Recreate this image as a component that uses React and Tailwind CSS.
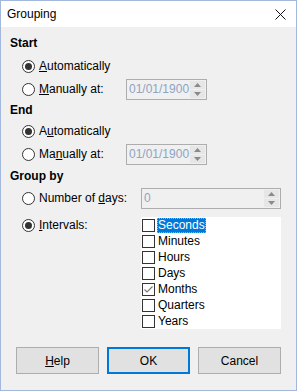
import React from "react";

const Radio = ({ checked }) => (
  <span className="w-[13px] h-[13px] rounded-full border border-[#333] bg-white flex items-center justify-center shrink-0">
    {checked && <span className="w-[7px] h-[7px] rounded-full bg-[#333]" />}
  </span>
);

const Spinner = () => (
  <div className="flex flex-col w-[15px] h-[17px] mr-[1px]">
    <div className="flex-1 bg-[#e6e6e6] border-b border-[#f0f0f0] flex items-center justify-center">
      <svg width="7" height="4" viewBox="0 0 7 4">
        <path d="M0 4 L3.5 0 L7 4 Z" fill="#8a8a8a" />
      </svg>
    </div>
    <div className="flex-1 bg-[#e6e6e6] flex items-center justify-center">
      <svg width="7" height="4" viewBox="0 0 7 4">
        <path d="M0 0 L3.5 4 L7 0 Z" fill="#8a8a8a" />
      </svg>
    </div>
  </div>
);

const Field = ({ value, width }) => (
  <div
    className={`${width} h-[21px] border border-[#adadad] bg-[#f0f0f0] flex items-center justify-between pl-[2px]`}
  >
    <span className="text-[#8fa3c4]">{value}</span>
    <Spinner />
  </div>
);

const Check = ({ checked }) => (
  <span className="w-[13px] h-[13px] border border-[#333] bg-white shrink-0 flex items-center justify-center">
    {checked && (
      <svg width="11" height="11" viewBox="0 0 11 11">
        <polyline points="1.5,5.5 4,8 9.5,2.5" fill="none" stroke="#7a7a7a" strokeWidth="1.2" />
      </svg>
    )}
  </span>
);

const Btn = ({ children, primary }) => (
  <button
    className={`w-[83px] h-[27px] bg-[#e1e1e1] flex items-center justify-center ${
      primary ? "border-2 border-[#0078d7]" : "border border-[#adadad]"
    }`}
  >
    {children}
  </button>
);

const App = () => {
  const intervals = ["Seconds", "Minutes", "Hours", "Days", "Months", "Quarters", "Years"];

  return (
    <div
      className="w-[297px] h-[391px] border border-[#a3b8dc] bg-[#f0f0f0] flex flex-col text-[12px] text-black leading-none"
      style={{ fontFamily: '"Liberation Sans", Arial, sans-serif' }}
    >
      {/* TITLE BAR */}
      <div className="h-[26px] bg-white flex items-center justify-between pl-[6px] pr-[10px]">
        <span className="text-[12px]">Grouping</span>
        <svg width="11" height="11" viewBox="0 0 11 11">
          <path d="M0.5 0.5 L10.5 10.5 M10.5 0.5 L0.5 10.5" stroke="#111" strokeWidth="1" />
        </svg>
      </div>

      {/* BODY */}
      <div className="flex flex-col pl-[9px] pr-[15px] pt-[7px]">
        {/* Start */}
        <div className="h-[18px] flex items-center font-bold">Start</div>
        <div className="mt-[2px] h-[24px] flex items-center pl-[12px] gap-[4px]">
          <Radio checked />
          <span>
            <span className="underline">A</span>utomatically
          </span>
        </div>
        <div className="h-[22px] flex items-center pl-[12px]">
          <Radio />
          <span className="ml-[4px] w-[87px]">
            <span className="underline">M</span>anually at:
          </span>
          <Field value="01/01/1900" width="w-[81px]" />
        </div>

        {/* End */}
        <div className="mt-[1px] h-[18px] flex items-center font-bold">End</div>
        <div className="h-[24px] flex items-center pl-[12px] gap-[4px]">
          <Radio checked />
          <span>
            A<span className="underline">u</span>tomatically
          </span>
        </div>
        <div className="h-[22px] flex items-center pl-[12px]">
          <Radio />
          <span className="ml-[4px] w-[87px]">
            Ma<span className="underline">n</span>ually at:
          </span>
          <Field value="01/01/1900" width="w-[81px]" />
        </div>

        {/* Group by */}
        <div className="mt-[2px] h-[18px] flex items-center font-bold">Group by</div>
        <div className="mt-[2px] h-[22px] flex items-center pl-[12px]">
          <Radio />
          <span className="ml-[4px] w-[102px]">
            Number of <span className="underline">d</span>ays:
          </span>
          <Field value="0" width="flex-1" />
        </div>
        <div className="mt-[8px] flex items-start pl-[12px]">
          <div className="h-[16px] flex items-center">
            <Radio checked />
            <span className="ml-[4px] w-[102px]">
              <span className="underline">I</span>ntervals:
            </span>
          </div>
          <div className="flex-1 h-[112px] bg-white flex flex-col pl-[1px]">
            {intervals.map((name, i) => (
              <div key={name} className="h-[16px] flex items-center gap-[2px]">
                <Check checked={name === "Months"} />
                <span
                  className={`h-[15px] px-[1px] flex items-center ${
                    i === 0 ? "bg-[#0078d7] text-white outline-1 outline-dotted outline-[#f5a623] -outline-offset-1" : ""
                  }`}
                >
                  {name}
                </span>
              </div>
            ))}
          </div>
        </div>

        {/* BUTTONS */}
        <div className="mt-[18px] flex gap-[8px] pl-[6px]">
          <Btn>
            <span>
              <span className="underline">H</span>elp
            </span>
          </Btn>
          <Btn primary>OK</Btn>
          <Btn>Cancel</Btn>
        </div>
      </div>
    </div>
  );
};

export default App;
